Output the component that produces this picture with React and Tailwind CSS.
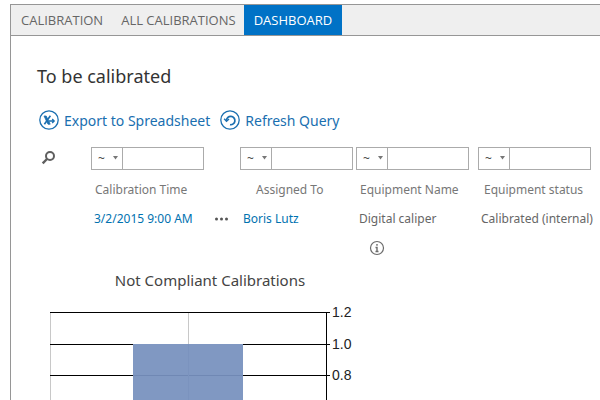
const tabs = ['CALIBRATION', 'ALL CALIBRATIONS', 'DASHBOARD']

const ticks = [
  { label: '1.2', y: 10 },
  { label: '1.0', y: 42 },
  { label: '0.8', y: 73 },
]

function ExportIcon() {
  return (
    <svg className="size-5" viewBox="0 0 20 20" fill="none" stroke="currentColor" aria-hidden="true">
      <circle cx="10" cy="10" r="9.2" strokeWidth="1.3" />
      <path d="M5 6h2.2l4 8.2H9z" fill="currentColor" strokeWidth="0.8" />
      <path d="M11.4 5.8 5.4 14.2" strokeWidth="1.6" />
      <path d="M10 11h5M13.2 9l2 2-2 2" strokeWidth="1.3" />
    </svg>
  )
}

function RefreshIcon() {
  return (
    <svg className="size-5" viewBox="0 0 20 20" fill="none" stroke="currentColor" aria-hidden="true">
      <circle cx="10" cy="10" r="9.2" strokeWidth="1.3" />
      <path d="M6.5 10.5a4.2 4.2 0 1 1 3.5 4.2" strokeWidth="1.7" />
      <path d="M4.2 8.8l2.3 2.5 2.5-2.3" strokeWidth="1.5" />
    </svg>
  )
}

function SearchIcon() {
  return (
    <svg className="size-4" viewBox="0 0 16 16" fill="none" stroke="#5f5f5f" aria-hidden="true">
      <circle cx="9" cy="6" r="4" strokeWidth="2" />
      <path d="M6 9 1.7 13.3" strokeWidth="2.4" />
    </svg>
  )
}

function InfoIcon() {
  return (
    <svg className="size-4" viewBox="0 0 16 16" fill="none" stroke="#6b6b6b" aria-hidden="true">
      <circle cx="8" cy="8" r="6.5" strokeWidth="1.2" />
      <path d="M8 4v1.8M6.5 7.5H8V11M6.5 11.5h3" strokeWidth="1.4" />
    </svg>
  )
}

function Filter({ name }) {
  return (
    <div className="flex h-[23px] w-[113px] border border-[#ababab]">
      <div className="relative w-[31px] border-r border-[#ababab]">
        <select
          aria-label={`${name} operator`}
          className="block h-full w-full appearance-none bg-transparent pl-1.5 text-xs text-[#444444] outline-none"
        >
          <option>~</option>
          <option>=</option>
        </select>
        <svg className="pointer-events-none absolute top-2 right-1 h-1 w-[5px]" viewBox="0 0 5 4" fill="#777777" aria-hidden="true">
          <path d="M0 0h5L2.5 3.5z" />
        </svg>
      </div>
      <input type="text" aria-label={name} className="min-w-0 flex-1 px-1 text-xs outline-none" />
    </div>
  )
}

function Chart() {
  return (
    <svg className="block h-[98px] w-[320px]" viewBox="0 0 320 98" role="img" aria-label="Not Compliant Calibrations">
      <g shapeRendering="crispEdges">
        <path d="M0.5 10v88M138.5 10v88" stroke="#c8c8c8" />
        {ticks.map((t) => (
          <path key={t.label} d={`M0 ${t.y + 0.5}H280`} stroke="#000000" />
        ))}
        <path d="M276.5 10v88" stroke="#000000" />
        <rect x="83" y="42" width="110" height="56" fill="#8098c2" />
        <path d="M83 73.5H193" stroke="#7088b4" />
        <path d="M138.5 42v56" stroke="#7b93be" />
      </g>
      {ticks.map((t) => (
        <text key={t.label} x="282" y={t.y + 5} fill="#222222" className="font-['Liberation_Sans',sans-serif] text-[14px]">
          {t.label}
        </text>
      ))}
    </svg>
  )
}

export default function App() {
  return (
    <div className="flex min-h-screen flex-col bg-white pt-1 pl-2.5 font-['Noto_Sans','Open_Sans',sans-serif]">
      <div className="flex-1 border-t border-l border-[#969696]">
        <nav className="flex h-[31px] border-b border-[#969696] bg-[#efefef] font-['Open_Sans','Noto_Sans',sans-serif] text-[13px] leading-[30px]">
          {tabs.map((tab) => (
            <a
              key={tab}
              href="#"
              className={
                tab === 'DASHBOARD'
                  ? 'bg-[#0072c6] px-2.5 text-white'
                  : 'pr-2 pl-2.5 text-[#666666]'
              }
            >
              {tab}
            </a>
          ))}
        </nav>

        <main className="pl-[26px]">
          <h1 className="pt-[26px] text-lg leading-7 text-[#333333]">To be calibrated</h1>

          <div className="mt-[19px] flex gap-2.5 text-sm leading-5 text-[#1a6fb0]">
            <button type="button" className="flex items-center gap-[5px] pl-0.5">
              <ExportIcon />
              <span className="pt-0.5">Export to Spreadsheet</span>
            </button>
            <button type="button" className="flex items-center gap-[5px]">
              <RefreshIcon />
              <span className="pt-0.5">Refresh Query</span>
            </button>
          </div>

          <table className="mt-4 w-full table-fixed text-left text-xs whitespace-nowrap text-[#666666]">
            <colgroup>
              <col className="w-[54px]" />
              <col className="w-[149px]" />
              <col className="w-[116px]" />
              <col className="w-[122px]" />
              <col />
            </colgroup>
            <thead>
              <tr>
                <td className="pb-0.5 pl-1">
                  <button type="button" aria-label="Search" className="block">
                    <SearchIcon />
                  </button>
                </td>
                <td><Filter name="Calibration Time" /></td>
                <td><Filter name="Assigned To" /></td>
                <td><Filter name="Equipment Name" /></td>
                <td><Filter name="Equipment status" /></td>
              </tr>
              <tr className="h-10 text-[#777777]">
                <td />
                <th className="pl-1 font-normal">Calibration Time</th>
                <th className="pl-4 font-normal">Assigned To</th>
                <th className="pl-1 font-normal">Equipment Name</th>
                <th className="pl-1.5 font-normal">Equipment status</th>
              </tr>
            </thead>
            <tbody>
              <tr className="h-[18px] leading-[18px]">
                <td />
                <td className="pl-[3px]">
                  <div className="flex items-center justify-between pr-3">
                    <a href="#" className="text-[#0072b0]">3/2/2015 9:00 AM</a>
                    <button type="button" aria-label="More">
                      <svg className="block h-1 w-[13px]" viewBox="0 0 13 4" fill="#555555" aria-hidden="true">
                        <circle cx="1.5" cy="2" r="1.5" />
                        <circle cx="6.5" cy="2" r="1.5" />
                        <circle cx="11.5" cy="2" r="1.5" />
                      </svg>
                    </button>
                  </div>
                </td>
                <td className="pl-[3px]"><a href="#" className="text-[#0072b0]">Boris Lutz</a></td>
                <td className="pl-[3px]">Digital caliper</td>
                <td className="pl-[3px]">Calibrated (internal)</td>
              </tr>
              <tr>
                <td colSpan="3" />
                <td className="pt-3 pl-[13px]">
                  <button type="button" aria-label="Information" className="block">
                    <InfoIcon />
                  </button>
                </td>
                <td />
              </tr>
            </tbody>
          </table>

          <section className="ml-[13px]">
            <h2 className="w-[320px] pt-3 text-center text-[15px] leading-6 text-[#444444]">Not Compliant Calibrations</h2>
            <div className="pt-2.5">
              <Chart />
            </div>
          </section>
        </main>
      </div>
    </div>
  )
}
